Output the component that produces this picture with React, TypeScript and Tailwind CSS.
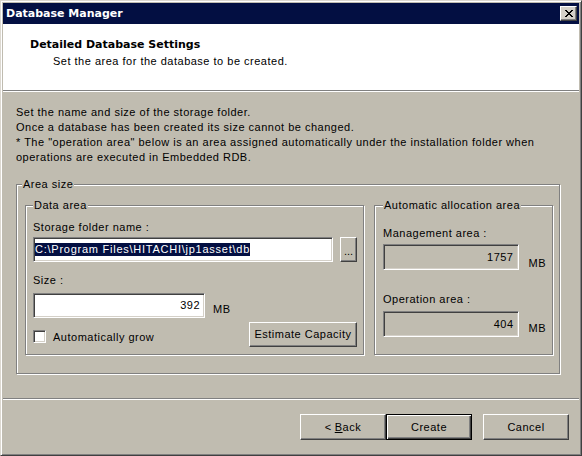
import React from "react";

const sunken =
  "border border-t-[#808080] border-l-[#808080] border-r-white border-b-white shadow-[inset_1px_1px_0_#404040,inset_-1px_-1px_0_#d4d0c8]";
const raised =
  "border border-t-white border-l-white border-r-[#404040] border-b-[#404040] shadow-[inset_-1px_-1px_0_#808080]";
const etched =
  "border border-[#808080] shadow-[inset_1px_1px_0_#ffffff,1px_1px_0_#ffffff] min-w-0";
const bold = "font-['DejaVu_Sans',Verdana,sans-serif] font-bold tracking-normal";

function CloseGlyph() {
  const px: [number, number][] = [
    [0, 0], [1, 0], [6, 0], [7, 0],
    [1, 1], [2, 1], [5, 1], [6, 1],
    [2, 2], [3, 2], [4, 2], [5, 2],
    [3, 3], [4, 3],
    [2, 4], [3, 4], [4, 4], [5, 4],
    [1, 5], [2, 5], [5, 5], [6, 5],
    [0, 6], [1, 6], [6, 6], [7, 6],
  ];
  return (
    <svg width="8" height="7" viewBox="0 0 8 7" shapeRendering="crispEdges">
      {px.map(([x, y], i) => (
        <rect key={i} x={x} y={y} width="1" height="1" fill="#000" />
      ))}
    </svg>
  );
}

export default function App() {
  return (
    <div className="w-[582px] h-[456px] bg-[#c0bcb0] border border-t-[#dcd8d0] border-l-[#dcd8d0] border-r-[#404040] border-b-[#404040] shadow-[inset_1px_1px_0_#ffffff,inset_-1px_-1px_0_#808080] p-[2px] flex flex-col font-['Liberation_Sans',Arial,sans-serif] text-[11px] leading-[13px] tracking-[0.5px] text-black overflow-hidden">
      {/* Title bar */}
      <div className="h-[21px] shrink-0 bg-[#030f42] flex items-center justify-between pl-[3px] pr-[2px]">
        <span className={`${bold} text-white text-[11px] leading-[13px]`}>Database Manager</span>
        <div className={`w-[17px] h-[15px] bg-[#d4d0c8] flex items-center justify-center ${raised}`}>
          <CloseGlyph />
        </div>
      </div>

      {/* Header */}
      <div className="h-[66px] shrink-0 bg-white pl-[27px] pt-[14px]">
        <div className={`${bold} text-[11px] leading-[13px]`}>Detailed Database Settings</div>
        <div className="mt-[4px] pl-[23px]">Set the area for the database to be created.</div>
      </div>
      <div className="h-[1px] shrink-0 bg-[#808080]" />
      <div className="h-[1px] shrink-0 bg-white" />

      {/* Body */}
      <div className="h-[306px] shrink-0 pl-[13px] pt-[13px]">
        <p className="leading-[15px] whitespace-nowrap">
          Set the name and size of the storage folder.
          <br />
          Once a database has been created its size cannot be changed.
          <br />
          * The "operation area" below is an area assigned automatically under the installation folder when
          <br />
          operations are executed in Embedded RDB.
        </p>

        <fieldset className={`mt-[13px] w-[544px] pl-[8px] pr-[6px] pt-[8px] pb-[18px] ${etched}`}>
          <legend className="ml-[-3px] px-[1px] bg-[#c0bcb0] leading-[13px]">Area size</legend>
          <div className="flex gap-[10px]">
            {/* Data area */}
            <fieldset className={`w-[339px] h-[156px] pl-[7px] pr-[6px] pt-[9px] ${etched}`}>
              <legend className="px-[1px] bg-[#c0bcb0] leading-[13px]">Data area</legend>
              <div>Storage folder name :</div>
              <div className="mt-[3px] flex justify-between">
                <div className={`w-[300px] h-[25px] bg-white flex items-center pl-[1px] ${sunken}`}>
                  <span className="bg-[#030f42] text-white whitespace-nowrap tracking-[0.75px]">C:\Program Files\HITACHI\jp1asset\db</span>
                </div>
                <div className={`w-[17px] h-[25px] bg-[#c0bcb0] flex items-center justify-center ${raised}`}>
                  <span className="tracking-normal leading-[13px] mt-[3px]">...</span>
                </div>
              </div>
              <div className="mt-[12px]">Size :</div>
              <div className="mt-[6px] flex items-end">
                <div className={`w-[172px] h-[25px] bg-white flex items-center justify-end pr-[4px] ${sunken}`}>
                  392
                </div>
                <span className="ml-[8px] mb-[2px]">MB</span>
              </div>
              <div className="mt-[4px] flex justify-between items-start">
                <div className="flex items-center pt-[7px]">
                  <div className={`w-[13px] h-[13px] bg-white ${sunken}`} />
                  <span className="ml-[7px] mt-[2px]">Automatically grow</span>
                </div>
                <div className={`w-[108px] h-[25px] bg-[#c0bcb0] flex items-center justify-center ${raised}`}>
                  Estimate Capacity
                </div>
              </div>
            </fieldset>

            {/* Automatic allocation area */}
            <fieldset className={`w-[179px] h-[156px] pl-[8px] pr-[6px] pt-[15px] ${etched}`}>
              <legend className="px-[1px] bg-[#c0bcb0] leading-[13px] whitespace-nowrap">Automatic allocation area</legend>
              <div>Management area :</div>
              <div className="mt-[4px] flex items-end">
                <div className={`w-[137px] h-[26px] bg-[#c0bcb0] flex items-center justify-end pr-[4px] ${sunken}`}>
                  1757
                </div>
                <span className="ml-[10px]">MB</span>
              </div>
              <div className="mt-[23px]">Operation area :</div>
              <div className="mt-[5px] flex items-end">
                <div className={`w-[137px] h-[26px] bg-[#c0bcb0] flex items-center justify-end pr-[4px] ${sunken}`}>
                  404
                </div>
                <span className="ml-[10px] mb-[2px]">MB</span>
              </div>
            </fieldset>
          </div>
        </fieldset>
      </div>

      <div className="h-[1px] shrink-0 bg-[#808080]" />
      <div className="h-[1px] shrink-0 bg-white" />

      {/* Footer buttons */}
      <div className="flex-1 flex justify-end items-start pr-[10px] pt-[14px]">
        <div className={`w-[86px] h-[26px] bg-[#c0bcb0] flex items-center justify-center ${raised}`}>
          &lt; <span className="underline ml-[3px]">B</span>ack
        </div>
        <div className="w-[86px] h-[26px] bg-[#c0bcb0] flex items-center justify-center border border-black shadow-[inset_1px_1px_0_#ffffff,inset_-1px_-1px_0_#404040,inset_-2px_-2px_0_#808080]">
          Create
        </div>
        <div className={`ml-[11px] w-[86px] h-[26px] bg-[#c0bcb0] flex items-center justify-center ${raised}`}>
          Cancel
        </div>
      </div>
    </div>
  );
}
